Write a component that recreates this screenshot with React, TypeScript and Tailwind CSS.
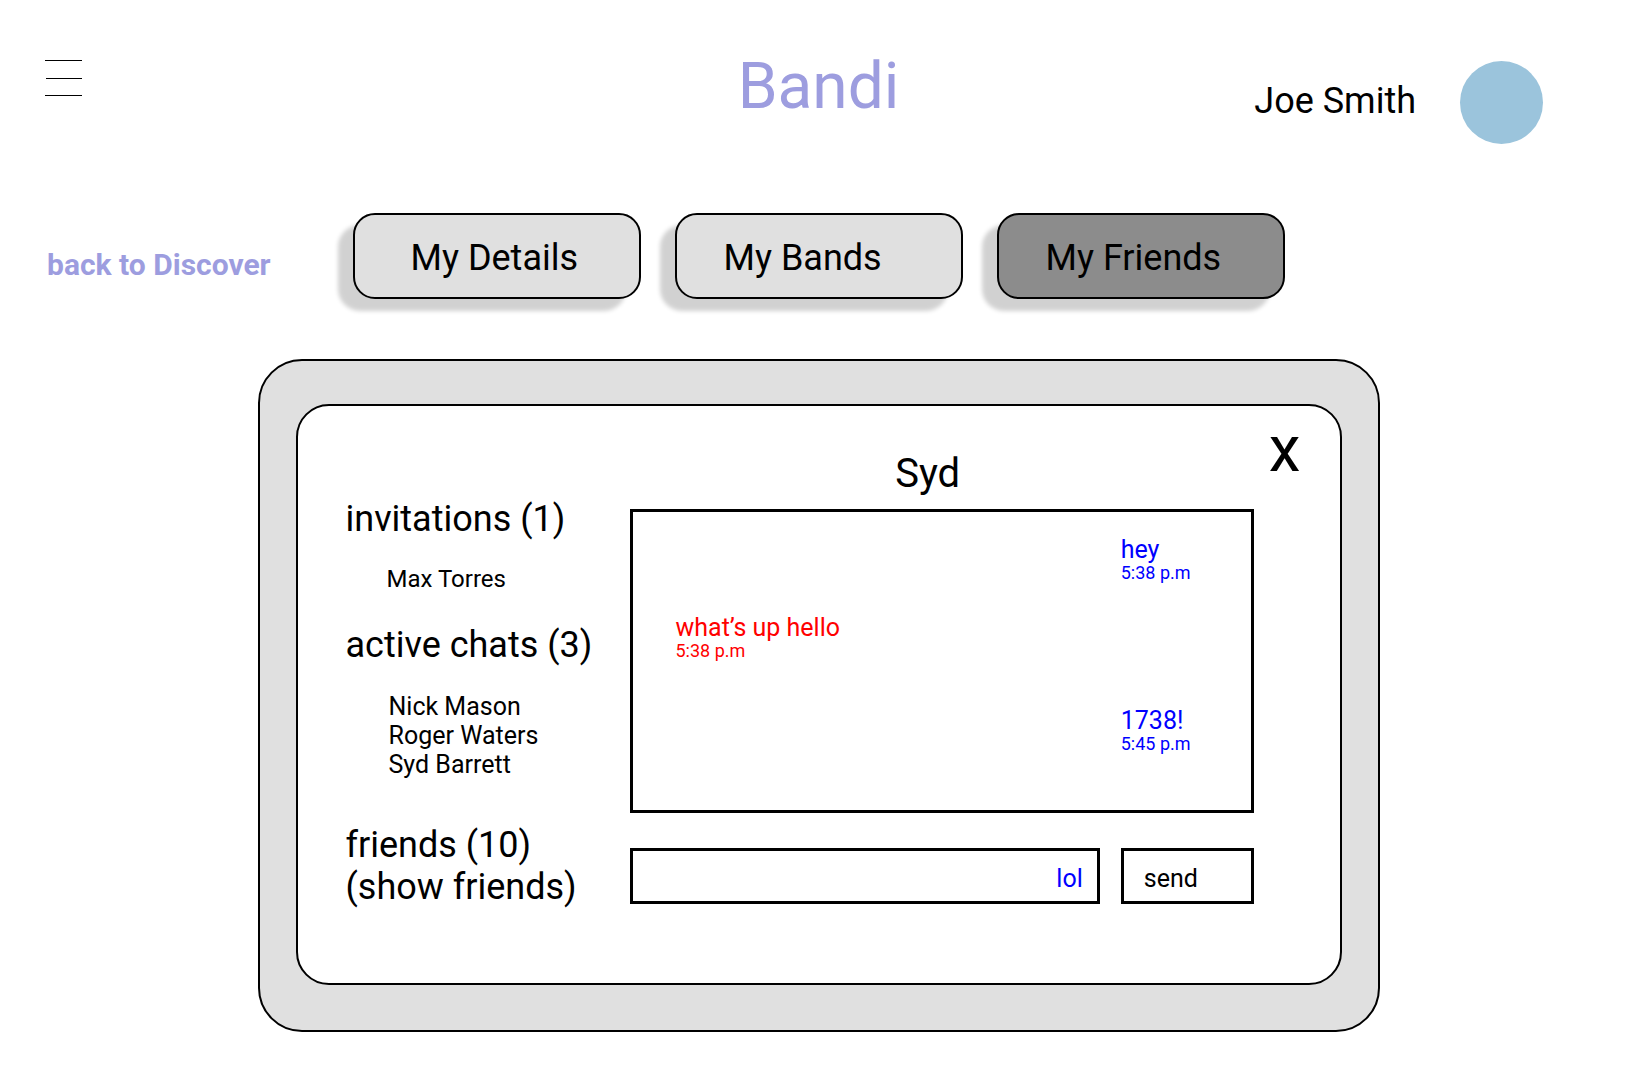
import { useState } from "react";

const tabs = [
  { label: "My Details", look: "bg-[#e0e0e0] pl-14" },
  { label: "My Bands", look: "bg-[#e0e0e0] pl-[47px]" },
  { label: "My Friends", look: "bg-[#8c8c8c] pl-[47px]" },
];

type MessageProps = { text: string; time: string; look: string };

function Message({ text, time, look }: MessageProps) {
  return (
    <li className={look}>
      <p className="text-[25px] leading-[26px]">{text}</p>
      <p className="-mt-px text-lg leading-[21px]">{time}</p>
    </li>
  );
}

function Header() {
  return (
    <header className="grid grid-cols-[1fr_auto_1fr] items-start px-[45px] pt-[49px]">
      <button type="button" aria-label="Menu" className="mt-[11px] w-[37px]">
        <svg width="37" height="36" viewBox="0 0 37 36" fill="#000" shapeRendering="crispEdges">
          <rect x="0" y="0" width="37" height="1" />
          <rect x="1" y="18" width="36" height="1" />
          <rect x="0" y="35" width="37" height="1" />
        </svg>
      </button>
      <h1 className="text-[64px] leading-[76px] text-[#9d9ddf]">Bandi</h1>
      <div className="mt-3 flex items-center justify-end gap-11 pr-[49px]">
        <span className="pb-[3px] text-4xl leading-[42px]">Joe Smith</span>
        <span className="size-[83px] rounded-full bg-[#9bc4dc]" />
      </div>
    </header>
  );
}

function Navigation() {
  return (
    <nav className="mt-[69px] grid grid-cols-[1fr_auto_1fr] items-start px-[45px]">
      <a href="#discover" className="mt-[34px] pl-0.5 text-3xl leading-9 font-bold text-[#9d9ddf]">
        back to Discover
      </a>
      <div className="flex gap-[34px]">
        {tabs.map((tab) => (
          <button
            key={tab.label}
            type="button"
            className={`h-[86px] w-[288px] rounded-[22px] border-2 border-black pt-[3px] text-left text-4xl leading-[42px] shadow-[-15px_12px_4px_rgba(0,0,0,0.18)] ${tab.look}`}
          >
            {tab.label}
          </button>
        ))}
      </div>
    </nav>
  );
}

function Sidebar() {
  return (
    <aside className="w-[284px] shrink-0 pt-[92px] text-4xl leading-[42px]">
      <h2>invitations (1)</h2>
      <ul className="mt-[25px] pl-[41px] text-2xl leading-[29px]">
        <li>Max Torres</li>
      </ul>
      <h2 className="mt-[30px]">active chats (3)</h2>
      <ul className="mt-[26px] pl-[43px] text-[25px] leading-[29px]">
        <li>Nick Mason</li>
        <li>Roger Waters</li>
        <li>Syd Barrett</li>
      </ul>
      <h2 className="mt-[45px]">friends (10)</h2>
      <button type="button" className="block text-left">
        (show friends)
      </button>
    </aside>
  );
}

function Chat() {
  const [draft, setDraft] = useState("lol");
  return (
    <section className="min-w-0 flex-1 pt-11">
      <h2 className="pr-7 text-center text-[40px] leading-[48px]">Syd</h2>
      <ul className="mt-[11px] flex flex-col border-3 border-black pt-[25px] pb-14">
        <Message text="hey" time="5:38 p.m" look="w-[130px] self-end text-[#0000ff]" />
        <Message text="what’s up hello" time="5:38 p.m" look="mt-8 pl-[43px] text-[#ff0000]" />
        <Message text="1738!" time="5:45 p.m" look="mt-[47px] w-[130px] self-end text-[#0000ff]" />
      </ul>
      <form className="mt-[35px] flex gap-[21px] text-[25px] leading-[29px]" onSubmit={(e) => e.preventDefault()}>
        <input
          type="text"
          aria-label="Message"
          value={draft}
          onChange={(e) => setDraft(e.target.value)}
          className="h-14 min-w-0 flex-1 border-3 border-black pt-1 pr-[14px] pl-[14px] text-right text-[#0000ff] outline-none"
        />
        <button type="submit" className="h-14 w-[133px] border-3 border-black pt-1 pl-5 text-left">
          send
        </button>
      </form>
    </section>
  );
}

export default function App() {
  return (
    <div className="min-h-screen bg-white pb-[39px] font-[Roboto,sans-serif] text-black">
      <Header />
      <Navigation />
      <main className="mx-auto mt-[60px] max-w-[1122px] rounded-[44px] border-2 border-black bg-[#e0e0e0] px-9 pt-[43px] pb-[45px]">
        <div className="flex items-start rounded-[33px] border-2 border-black bg-white pr-[39px] pb-[75px] pl-12">
          <Sidebar />
          <Chat />
          <button type="button" aria-label="Close chat" className="mt-3 ml-[15px] text-[64px] leading-none">
            x
          </button>
        </div>
      </main>
    </div>
  );
}
